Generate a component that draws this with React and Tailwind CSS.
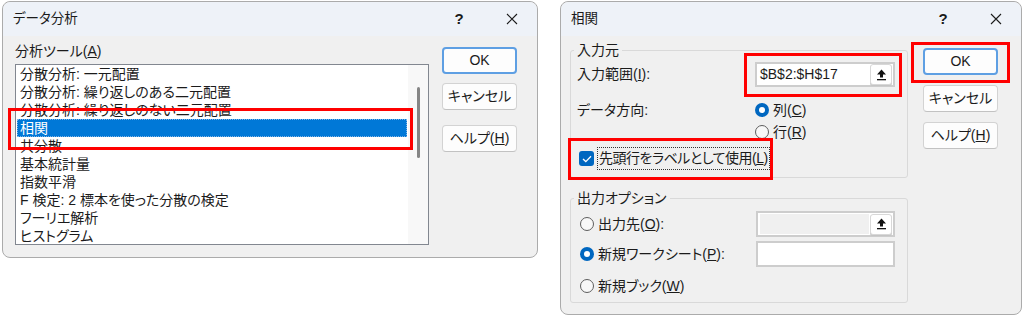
import React from 'react';

const tools = [
    '分散分析: 一元配置',
    '分散分析: 繰り返しのある二元配置',
    '分散分析: 繰り返しのない二元配置',
    '相関',
    '共分散',
    '基本統計量',
    '指数平滑',
    'F 検定: 2 標本を使った分散の検定',
    'フーリエ解析',
    'ヒストグラム',
];

const TitleBar = ({ title }) => (
    <div className="flex h-[34px] shrink-0 items-center rounded-t-[8px] bg-[#eef2f8] pl-[10px] text-[13.5px]">
        <span>{title}</span>
        <div className="ml-auto flex items-center">
            <span className="w-[20px] text-center text-[15px] font-semibold">?</span>
            <span className="w-[37px]" />
            <svg width="12" height="12" viewBox="0 0 12 12" className="mr-[19px]">
                <path d="M1 1L11 11M11 1L1 11" stroke="#1b1b1b" strokeWidth="1.1" />
            </svg>
        </div>
    </div>
);

const Btn = ({ children, primary, className = '' }) => (
    <div
        className={
            (primary
                ? 'border-2 border-[#5e9fe3] '
                : 'border border-[#d3d3d3] border-b-[#c2c2c2] ') +
            'flex h-[27px] w-[75px] items-center justify-center rounded-[4px] bg-[#fdfdfd] text-[14px] ' +
            className
        }
    >
        {children}
    </div>
);

const Radio = ({ checked }) =>
    checked ? (
        <span className="flex h-[14px] w-[14px] shrink-0 items-center justify-center rounded-full bg-[#0067c0]">
            <span className="h-[6px] w-[6px] rounded-full bg-white" />
        </span>
    ) : (
        <span className="block h-[14px] w-[14px] shrink-0 rounded-full border border-[#5e5e5e] bg-[#f8f8f8]" />
    );

const UploadBtn = () => (
    <div className="flex h-[21px] w-[22px] shrink-0 items-center justify-center rounded-[3px] border border-[#d8d8d8] bg-white shadow-[0_1px_0_#c4c4c4]">
        <svg width="11" height="12" viewBox="0 0 11 12">
            <path d="M5.5 0.5L10 5.5H7V8.5H4V5.5H1Z" fill="#111" />
            <rect x="1" y="10" width="9" height="1.3" fill="#111" />
        </svg>
    </div>
);

const Field = ({ value, disabled, button }) => (
    <div className="flex h-[26px] w-[139px] items-center border-2 border-[#cdcdcd] bg-white p-[1px]">
        {disabled ? (
            <div className="m-[1px] h-full flex-1 bg-[#f0f0f0]" />
        ) : (
            <span className="flex-1 pl-[2px] text-[14px]">{value}</span>
        )}
        {button && <UploadBtn />}
    </div>
);

const DataAnalysis = () => (
    <div className="relative flex h-[257px] w-[536px] flex-col rounded-[8px] border border-[#ababab] bg-[#f0f0f0]">
        <TitleBar title="データ分析" />
        <div className="flex pl-[12px]">
            <div>
                <div className="mt-[7px] h-[17px] text-[14px] leading-[17px]">
                    分析ツール(<u>A</u>)
                </div>
                <div className="mt-[4px] flex h-[181px] w-[414px] border border-[#828790] bg-white">
                    <div className="flex-1 overflow-hidden px-[1px]">
                        {tools.map((t, i) => (
                            <div
                                key={t}
                                className={
                                    i === 3
                                        ? 'h-[18px] whitespace-nowrap bg-[#0078d7] pl-[3px] text-[14px] leading-[18px] text-white outline-1 outline-dotted outline-[#7fb4e6] -outline-offset-1'
                                        : 'h-[18px] whitespace-nowrap pl-[3px] text-[14px] leading-[18px]'
                                }
                            >
                                {t}
                            </div>
                        ))}
                    </div>
                    <div className="w-[20px] bg-[#f8f8f8] pt-[22px]">
                        <div className="ml-[9px] h-[71px] w-[3px] rounded-full bg-[#858585]" />
                    </div>
                </div>
            </div>
            <div className="ml-[13px] flex flex-col pt-[11px]">
                <Btn primary>OK</Btn>
                <Btn className="mt-[9px]">キャンセル</Btn>
                <Btn className="mt-[15px]">
                    ヘルプ(<u>H</u>)
                </Btn>
            </div>
        </div>
        <div className="absolute left-[5px] top-[106px] h-[42px] w-[405px] border-[3px] border-[#ff0000]" />
    </div>
);

const Correlation = () => (
    <div className="relative ml-[22px] flex h-[314px] w-[462px] flex-col rounded-[8px] border border-[#ababab] bg-[#f0f0f0]">
        <TitleBar title="相関" />
        <div className="flex pl-[9px]">
            <div className="w-[338px]">
                <fieldset className="mt-[6px] h-[136px] rounded-[3px] border border-[#d9d9d9] pl-[3px]">
                    <legend className="px-[3px] text-[14px] leading-[17px]">入力元</legend>
                    <div className="pl-[3px]">
                        <div className="mt-[3px] flex h-[25px] items-center">
                            <span className="w-[178px] text-[14px]">
                                入力範囲(<u>I</u>):
                            </span>
                            <div className="flex h-[25px] w-[140px] items-center border-2 border-[#cdcdcd] bg-white p-[1px]">
                                <span className="flex-1 pl-[2px] text-[14px]">$B$2:$H$17</span>
                                <UploadBtn />
                            </div>
                        </div>
                        <div className="mt-[13px] flex">
                            <span className="h-[20px] w-[178px] text-[14px] leading-[20px]">データ方向:</span>
                            <div className="flex flex-col gap-[2px] text-[14px]">
                                <div className="flex h-[20px] items-center gap-[4px]">
                                    <Radio checked />
                                    <span>
                                        列(<u>C</u>)
                                    </span>
                                </div>
                                <div className="flex h-[20px] items-center gap-[4px]">
                                    <Radio />
                                    <span>
                                        行(<u>R</u>)
                                    </span>
                                </div>
                            </div>
                        </div>
                        <div className="mt-[5px] flex h-[23px] items-center pl-[2px]">
                            <span className="flex h-[15px] w-[15px] shrink-0 items-center justify-center rounded-[3px] bg-[#0067c0]">
                                <svg width="10" height="8" viewBox="0 0 10 8">
                                    <path d="M1 4L3.8 6.6L9 1.2" stroke="white" strokeWidth="1.3" fill="none" />
                                </svg>
                            </span>
                            <span className="ml-[3px] flex h-[23px] items-center whitespace-nowrap border border-dotted border-[#333] px-[1px] text-[14px] tracking-[-0.5px]">
                                先頭行をラベルとして使用(<u>L</u>)
                            </span>
                        </div>
                    </div>
                </fieldset>
                <fieldset className="mt-[12px] h-[113px] rounded-[3px] border border-[#d9d9d9] pl-[3px]">
                    <legend className="px-[3px] text-[14px] leading-[17px]">出力オプション</legend>
                    <div className="pl-[3px] text-[14px]">
                        <div className="mt-[4px] flex h-[26px] items-center">
                            <div className="flex w-[179px] items-center gap-[4px] pl-[3px]">
                                <Radio />
                                <span>
                                    出力先(<u>O</u>):
                                </span>
                            </div>
                            <Field disabled button />
                        </div>
                        <div className="mt-[4px] flex h-[26px] items-center">
                            <div className="flex w-[179px] items-center gap-[4px] pl-[3px]">
                                <Radio checked />
                                <span>
                                    新規ワークシート(<u>P</u>):
                                </span>
                            </div>
                            <Field value="" />
                        </div>
                        <div className="mt-[6px] flex h-[26px] items-center gap-[4px] pl-[3px]">
                            <Radio />
                            <span>
                                新規ブック(<u>W</u>)
                            </span>
                        </div>
                    </div>
                </fieldset>
            </div>
            <div className="ml-[15px] flex flex-col pt-[12px]">
                <Btn primary>OK</Btn>
                <Btn className="mt-[10px]">キャンセル</Btn>
                <Btn className="mt-[10px]">
                    ヘルプ(<u>H</u>)
                </Btn>
            </div>
        </div>
        <div className="absolute left-[183px] top-[51px] h-[44px] w-[158px] border-[3px] border-[#ff0000]" />
        <div className="absolute left-[7px] top-[136px] h-[42px] w-[205px] border-[3px] border-[#ff0000]" />
        <div className="absolute left-[350px] top-[40px] h-[41px] w-[99px] border-[3px] border-[#ff0000]" />
    </div>
);

export default function App() {
    return (
        <div className="flex h-[317px] w-[1024px] items-start bg-white pl-[2px] pt-[1px] text-[#1b1b1b] [font-family:'Liberation_Sans','Noto_Sans_CJK_JP',sans-serif] [font-feature-settings:'palt']">
            <DataAnalysis />
            <Correlation />
        </div>
    );
}
